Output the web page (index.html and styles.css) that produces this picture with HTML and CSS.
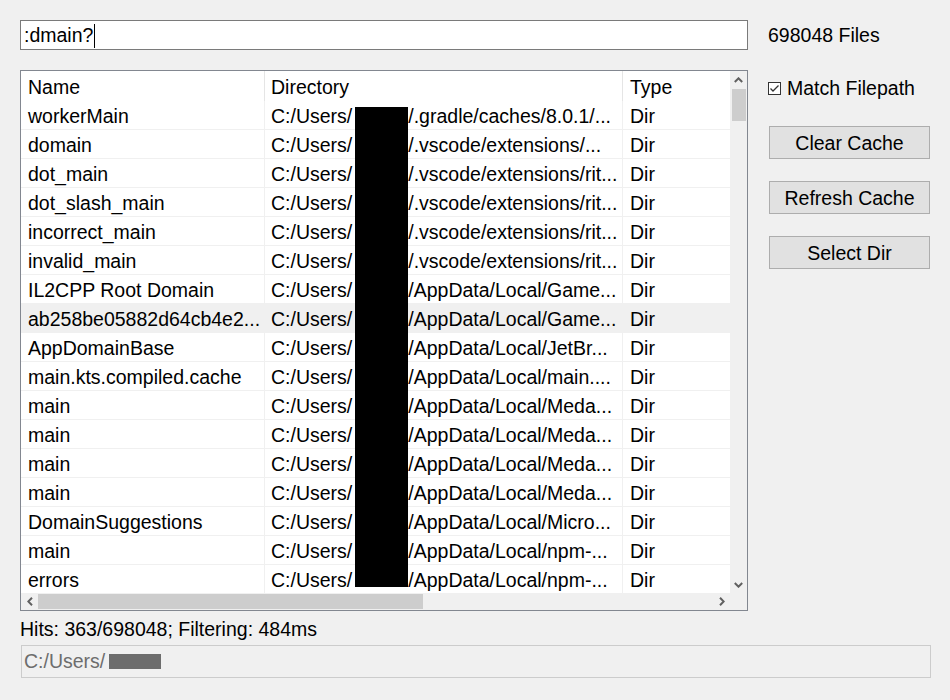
FILE: index.html
```html
<!DOCTYPE html>
<html>
<head>
<meta charset="utf-8">
<link rel="stylesheet" href="styles.css">
</head>
<body>
<div class="top">
  <div class="search"><span>:dmain?</span><span class="caret"></span></div>
  <div class="count">698048 Files</div>
</div>
<div class="main">
  <div class="table">
    <div class="viewport">
      <div class="row head"><div class="c">Name</div><div class="c">Directory</div><div class="c">Type</div></div>
      <div class="row"><div class="c">workerMain</div><div class="c">C:/Users/<span class="gap"></span>/.gradle/caches/8.0.1/...</div><div class="c">Dir</div></div>
      <div class="row"><div class="c">domain</div><div class="c">C:/Users/<span class="gap"></span>/.vscode/extensions/...</div><div class="c">Dir</div></div>
      <div class="row"><div class="c">dot_main</div><div class="c">C:/Users/<span class="gap"></span>/.vscode/extensions/rit...</div><div class="c">Dir</div></div>
      <div class="row"><div class="c">dot_slash_main</div><div class="c">C:/Users/<span class="gap"></span>/.vscode/extensions/rit...</div><div class="c">Dir</div></div>
      <div class="row"><div class="c">incorrect_main</div><div class="c">C:/Users/<span class="gap"></span>/.vscode/extensions/rit...</div><div class="c">Dir</div></div>
      <div class="row"><div class="c">invalid_main</div><div class="c">C:/Users/<span class="gap"></span>/.vscode/extensions/rit...</div><div class="c">Dir</div></div>
      <div class="row"><div class="c">IL2CPP Root Domain</div><div class="c">C:/Users/<span class="gap"></span>/AppData/Local/Game...</div><div class="c">Dir</div></div>
      <div class="row sel"><div class="c">ab258be05882d64cb4e2...</div><div class="c">C:/Users/<span class="gap"></span>/AppData/Local/Game...</div><div class="c">Dir</div></div>
      <div class="row"><div class="c">AppDomainBase</div><div class="c">C:/Users/<span class="gap"></span>/AppData/Local/JetBr...</div><div class="c">Dir</div></div>
      <div class="row"><div class="c">main.kts.compiled.cache</div><div class="c">C:/Users/<span class="gap"></span>/AppData/Local/main....</div><div class="c">Dir</div></div>
      <div class="row"><div class="c">main</div><div class="c">C:/Users/<span class="gap"></span>/AppData/Local/Meda...</div><div class="c">Dir</div></div>
      <div class="row"><div class="c">main</div><div class="c">C:/Users/<span class="gap"></span>/AppData/Local/Meda...</div><div class="c">Dir</div></div>
      <div class="row"><div class="c">main</div><div class="c">C:/Users/<span class="gap"></span>/AppData/Local/Meda...</div><div class="c">Dir</div></div>
      <div class="row"><div class="c">main</div><div class="c">C:/Users/<span class="gap"></span>/AppData/Local/Meda...</div><div class="c">Dir</div></div>
      <div class="row"><div class="c">DomainSuggestions</div><div class="c">C:/Users/<span class="gap"></span>/AppData/Local/Micro...</div><div class="c">Dir</div></div>
      <div class="row"><div class="c">main</div><div class="c">C:/Users/<span class="gap"></span>/AppData/Local/npm-...</div><div class="c">Dir</div></div>
      <div class="row"><div class="c">errors</div><div class="c">C:/Users/<span class="gap"></span>/AppData/Local/npm-...</div><div class="c">Dir</div></div>
      <div class="redact"></div>
    </div>
    <div class="vscroll">
      <div class="arrow"><svg width="9" height="6" viewBox="0 0 9 6"><polyline points="0.8,5 4.5,1.3 8.2,5" fill="none" stroke="#606060" stroke-width="2"/></svg></div>
      <div class="vthumb"></div>
      <div class="vtrack"></div>
      <div class="arrow"><svg width="9" height="6" viewBox="0 0 9 6"><polyline points="0.8,1 4.5,4.7 8.2,1" fill="none" stroke="#606060" stroke-width="2"/></svg></div>
    </div>
    <div class="hscroll">
      <div class="harrow"><svg width="6" height="9" viewBox="0 0 6 9"><polyline points="5,0.8 1.3,4.5 5,8.2" fill="none" stroke="#606060" stroke-width="2"/></svg></div>
      <div class="hthumb"></div>
      <div class="htrack"></div>
      <div class="harrow"><svg width="6" height="9" viewBox="0 0 6 9"><polyline points="1,0.8 4.7,4.5 1,8.2" fill="none" stroke="#606060" stroke-width="2"/></svg></div>
    </div>
    <div class="corner"></div>
  </div>
  <div class="side">
    <label class="check">
      <svg width="13" height="13" viewBox="0 0 13 13"><rect x="0.5" y="0.5" width="12" height="12" fill="#fff" stroke="#333"/><polyline points="2.5,6.5 5,9 10.5,3.5" fill="none" stroke="#333" stroke-width="1.3"/></svg>
      <span>Match Filepath</span>
    </label>
    <div class="btn first">Clear Cache</div>
    <div class="btn">Refresh Cache</div>
    <div class="btn">Select Dir</div>
  </div>
</div>
<div class="hits">Hits: 363/698048; Filtering: 484ms</div>
<div class="path"><span>C:/Users/</span><span class="pbox"></span></div>
</body>
</html>
```
FILE: styles.css
```css
* { box-sizing: border-box; }
html, body { margin: 0; padding: 0; }
body {
  background: #f0f0f0;
  font-family: "Liberation Sans", Arial, sans-serif;
  font-size: 19.5px;
  color: #000;
  padding: 20px 0 0 20px;
  width: 950px;
  height: 700px;
  overflow: hidden;
}
.top { display: flex; align-items: center; height: 30px; }
.search {
  width: 728px; height: 30px;
  background: #fff;
  border: 1px solid #7a7a7a;
  display: flex; align-items: center;
  padding-left: 3px;
  padding-top: 1px;
  line-height: 27px;
}
.caret { display: inline-block; width: 1px; height: 24px; background: #000; margin-left: 1px; }
.count { margin-left: 20px; }
.main { display: flex; margin-top: 20px; }
.table {
  width: 728px; height: 541px;
  border: 1px solid #828790;
  background: #fff;
  display: grid;
  grid-template-columns: 709px 17px;
  grid-template-rows: 522px 17px;
}
.viewport { position: relative; overflow: hidden; background: #fff; }
.row {
  display: grid;
  grid-template-columns: 244px 358px 220px;
  height: 29px;
  border-bottom: 1px solid #f0f0f0;
  white-space: nowrap;
}
.row.head { height: 30px; border-bottom: none; }
.row.head .c { line-height: 30px; border-right-color: #e5e5e5; }
.row.sel { background: #f0f0f0; }
.c {
  line-height: 28px;
  padding-top: 1px;
  padding-left: 7px;
  border-right: 1px solid #f0f0f0;
  overflow: hidden;
}
.c:nth-child(2) { padding-left: 6px; }
.gap { display: inline-block; width: 56px; }
.redact {
  position: absolute;
  left: 334px; top: 36px;
  width: 53px; height: 480px;
  background: #000;
}
.vscroll { background: #f0f0f0; display: flex; flex-direction: column; }
.arrow { height: 17px; display: flex; align-items: center; justify-content: center; flex: none; }
.vthumb { height: 32px; margin: 1px 1px 0 2px; background: #cdcdcd; flex: none; }
.vtrack { flex: 1; }
.hscroll { background: #f0f0f0; display: flex; }
.harrow { width: 17px; display: flex; align-items: center; justify-content: center; flex: none; }
.hthumb { width: 385px; margin: 1px 0; background: #cdcdcd; flex: none; }
.htrack { flex: 1; }
.corner { background: #f0f0f0; }
.side { margin-left: 20px; display: flex; flex-direction: column; }
.check { display: flex; align-items: center; height: 20px; margin-top: 8px; }
.check svg { flex: none; }
.check span { margin-left: 6px; }
.btn {
  width: 161px; height: 33px;
  margin-left: 1px;
  margin-top: 22px;
  padding-top: 2px;
  background: #e1e1e1;
  border: 1px solid #adadad;
  display: flex; align-items: center; justify-content: center;
}
.btn.first { margin-top: 28px; }
.hits { height: 34px; padding-top: 2px; line-height: 32px; }
.path {
  width: 910px; height: 33px;
  margin-left: 1px;
  border: 1px solid #cccccc;
  color: #6d6d6d;
  display: flex; align-items: center;
  padding-left: 2px;
}
.pbox { display: inline-block; width: 52px; height: 15px; background: #6d6d6d; margin-left: 4px; }
```
